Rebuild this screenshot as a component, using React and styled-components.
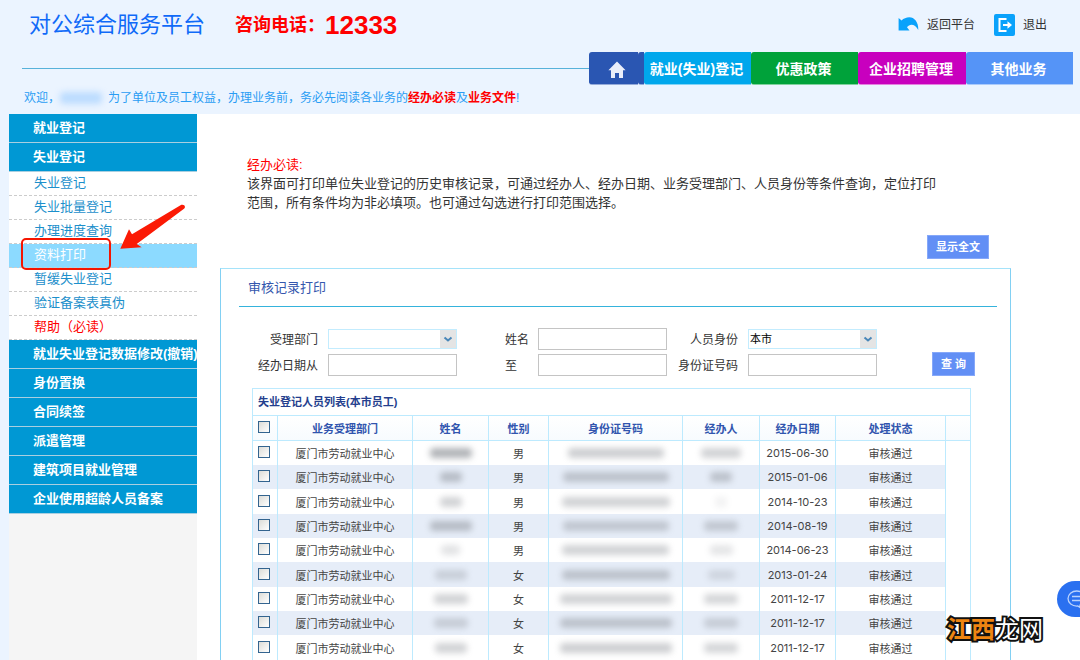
import React from "react";
import styled, { createGlobalStyle } from "styled-components";

const GlobalStyle = createGlobalStyle`
  *, *::before, *::after { box-sizing: border-box; }
  body {
    margin: 0;
    background: #ebf4ff;
    color: #333;
    font-family: "Liberation Sans", "Noto Sans CJK SC", sans-serif;
    font-size: 12px;
    overflow-x: hidden;
  }
  a { color: inherit; text-decoration: none; }
  button, input, select { font: inherit; }
`;

const Page = styled.div`
  position: relative;
  display: flex;
  flex-direction: column;
  min-height: 100vh;
  overflow: hidden;
`;

const Header = styled.header`
  display: flex;
  flex-direction: column;
  height: 114px;
`;

const Brand = styled.div`
  display: flex;
  align-items: center;
  height: 52px;
  padding: 0 33px 2px 29px;
`;

const Title = styled.h1`
  margin: 0;
  font-size: 22px;
  font-weight: 400;
  line-height: 32px;
  color: #0f6af8;
`;

const Hotline = styled.p`
  display: flex;
  align-items: center;
  margin: 0 auto 0 30px;
  font-size: 18px;
  font-weight: 700;
  line-height: 32px;
  color: #f00;
`;

const HotlineNumber = styled.strong`
  font-size: 26px;
`;

const TopLink = styled.a`
  display: flex;
  align-items: center;
  gap: 8px;
  margin-left: 19px;
  line-height: 20px;
`;

const NavBar = styled.div`
  display: flex;
  align-items: center;
  height: 33px;
  padding: 0 7px 0 22px;
`;

const Rule = styled.div`
  flex: 1;
  height: 1px;
  background: #57b2da;
`;

const Nav = styled.nav`
  display: flex;
  height: 33px;
`;

const NavItem = styled.a`
  display: flex;
  align-items: center;
  justify-content: center;
  width: ${(p) => p.$width || 107}px;
  padding-right: 2px;
  border-bottom: 1px solid rgba(255, 255, 255, 0.5);
  border-radius: 3px 0 0 3px;
  background: ${(p) => p.$color};
  color: #fff;
  font-size: 14px;
  font-weight: 700;
  white-space: nowrap;
`;

const HomeItem = styled(NavItem)`
  padding: 3px 0 0 6px;
`;

const Welcome = styled.p`
  display: flex;
  margin: 0;
  padding: 3px 24px;
  line-height: 20px;
  color: #2a9df4;
  white-space: nowrap;

  strong { color: #f00; }
`;

const UserName = styled.span`
  width: 42px;
  height: 12px;
  margin: 4px 6px 0 0;
  border-radius: 4px;
  background: #bcdcff;
  filter: blur(3px);
`;

const Body = styled.div`
  display: flex;
  flex: 1;
  padding-left: 9px;
`;

const Sidebar = styled.aside`
  flex: none;
  width: 188px;
  background: #f5f5f5;
`;

const Menu = styled.ul`
  margin: 0;
  padding: 0;
  list-style: none;
`;

const Group = styled.li`
  background: #0098d4;
  color: #fff;
  font-size: 13px;
  font-weight: 700;
`;

const GroupLink = styled.a`
  display: block;
  height: 29px;
  padding-left: 24px;
  border-bottom: 1px solid #a9cfe0;
  line-height: 27px;
  white-space: nowrap;
`;

const SubItem = styled.li`
  position: relative;
  background: ${(p) => (p.$active ? "#8cdaff" : "#fff")};
  color: ${(p) => (p.$active ? "#fff" : p.$alert ? "#f00" : "#1c8fcb")};
  font-size: 13px;
  font-weight: 400;
`;

const SubLink = styled.a`
  display: block;
  height: 24px;
  padding-left: 25px;
  border-bottom: 1px dashed #ccc;
  line-height: 21px;
`;

const Highlight = styled.span`
  position: absolute;
  z-index: 1;
  top: -6px;
  left: 12px;
  width: 90px;
  height: 32px;
  border: 2px solid #f51500;
  border-radius: 5px;
  pointer-events: none;
`;

const Arrow = styled.svg`
  position: absolute;
  z-index: 1;
  top: -40px;
  left: 110px;
  pointer-events: none;
`;

const Main = styled.main`
  display: flex;
  flex: 1;
  flex-direction: column;
  min-width: 0;
  padding: 41px 69px 0 23px;
  background: #fff;
`;

const Notice = styled.section`
  padding: 0 22px 0 27px;
  font-size: 13px;
  line-height: 19px;

  h2 {
    margin: 0;
    color: #f00;
    font-size: 13px;
    font-weight: 400;
  }
  p { margin: 0; }
`;

const NoticeActions = styled.div`
  display: flex;
  justify-content: flex-end;
  padding-top: 23px;
`;

const Button = styled.button`
  height: 24px;
  padding: 0 8px;
  border: 1px solid #86a8f9;
  background: #628ff5;
  color: #fff;
  font-size: 11px;
  font-weight: 700;
  line-height: 20px;
  white-space: nowrap;
`;

const Panel = styled.section`
  display: flex;
  flex: 1;
  flex-direction: column;
  margin-top: 9px;
  border: 1px solid #82d0f3;
  border-top-color: #a5e3fa;
  border-bottom: 0;
`;

const PanelTitle = styled.h2`
  margin: 0 13px 0 18px;
  padding-left: 9px;
  border-bottom: 1px solid #35b3dc;
  color: #3557ad;
  font-size: 13px;
  font-weight: 400;
  line-height: 37px;
`;

const Form = styled.form`
  display: grid;
  grid-template-columns: 66px 1fr 61px 1fr 61px 1fr 88px;
  align-items: center;
  gap: 4px 10px;
  margin: 21px 35px 12px 31px;
`;

const Label = styled.label`
  text-align: ${(p) => (p.$left ? "left" : "right")};
  padding: 0 0 2px ${(p) => (p.$left ? 38 : 0)}px;
  white-space: nowrap;
`;

const Input = styled.input`
  width: 100%;
  min-width: 0;
  height: 22px;
  padding: 0 2px;
  border: 1px solid #c4c4c4;
  background: #fff;
`;

const SelectBox = styled.div`
  position: relative;
  min-width: 0;

  svg {
    position: absolute;
    top: 1px;
    right: 1px;
    pointer-events: none;
  }
`;

const Select = styled.select`
  display: block;
  width: 100%;
  height: 20px;
  padding: 0 18px 0 1px;
  border: 1px solid #c3ecfe;
  border-radius: 0;
  appearance: none;
  background: #fff;
  color: #000;
  font-size: 11px;
`;

const Submit = styled(Button)`
  grid-column: 7;
  grid-row: 2;
  align-self: end;
  justify-self: end;
  width: 43px;
  margin-top: -2px;
`;

const TableBox = styled.div`
  flex: 1;
  margin: 0 39px 0 31px;
  border: 1px solid #bdeafe;
  border-bottom: 0;
`;

const Table = styled.table`
  width: 100%;
  table-layout: fixed;
  border-spacing: 0;
  font-size: 11px;
  color: #444;
  text-align: center;

  caption {
    padding-left: 5px;
    color: #253f8e;
    font-weight: 700;
    line-height: 26px;
    text-align: left;
  }
  th, td {
    height: 24px;
    padding: 0;
    border-right: 1px solid #bdeafe;
    white-space: nowrap;
  }
  th:last-child, td:last-child {
    border-right: 0;
  }
  th {
    height: 26px;
    border-top: 1px solid #bdeafe;
    border-bottom: 1px solid #bdeafe;
    background: linear-gradient(#fff, #f7fbfe);
    color: #3155ae;
    font-weight: 700;
  }
  tbody tr:nth-child(even) td:not(:last-child) {
    background: #e6edf8;
  }
  tbody tr:nth-child(3n) td {
    height: 25px;
  }
`;

const Check = styled.input`
  display: block;
  width: 12px;
  height: 12px;
  margin: 0 auto 2px 5px;
  appearance: none;
  border: 1px solid #33648f;
  background: linear-gradient(135deg, #dcdcd7, #fff);
`;

const DateText = styled.time`
  font-family: Inter, sans-serif;
`;

const Redacted = styled.span`
  display: block;
  height: 10px;
  margin: 0 auto;
  border-radius: 4px;
  background: #7d8188;
  filter: blur(3px);
`;

const ChatButton = styled.button`
  position: absolute;
  top: 581px;
  right: 0;
  display: flex;
  align-items: center;
  width: 23px;
  height: 36px;
  padding: 0 0 0 10px;
  overflow: hidden;
  border: 0;
  border-radius: 18px 0 0 18px;
  background: #2a70f0;
`;

const Watermark = styled.div`
  position: absolute;
  top: 613px;
  right: 37px;
  color: #ee8512;
  font-size: 24px;
  font-weight: 700;
  line-height: 34px;
  -webkit-text-stroke: 4px #111;
  paint-order: stroke fill;

  span {
    color: #fff;
    font-weight: 400;
  }
`;

const HomeIcon = () => (
  <svg width="18" height="18" viewBox="0 0 18 18" fill="#e9eefa" aria-hidden="true">
    <path d="M9 .5 17.6 9.3H15V17h-4v-5H7v5H3V9.3H.4Z" />
  </svg>
);

const ReturnIcon = () => (
  <svg width="21" height="16" viewBox="0 0 21 16" fill="#0aa2fb" aria-hidden="true">
    <path d="M.6 1V13.600H11.500L9 10.300C11.500 6.500 17 6.500 20.300 13 20.600 5 16.200.3 11.400.3 8.300.3 5.500 1.600 3.600 3.400Z" />
  </svg>
);

const ExitIcon = () => (
  <svg width="21" height="22" viewBox="0 0 21 22" fill="none" aria-hidden="true">
    <rect width="21" height="22" rx="2" fill="#0aa2fb" />
    <path d="M12.500 5H5.500V17H12.500M9 11H15" stroke="#fff" strokeWidth="2" />
    <path d="M13.500 7.200 18 11 13.500 14.800Z" fill="#fff" />
  </svg>
);

const DropIcon = () => (
  <svg width="16" height="18" viewBox="0 0 16 18" fill="none" aria-hidden="true">
    <rect width="16" height="18" fill="#e4e4e4" />
    <path d="M4.500 7.500 8 10.500 11.500 7.500" stroke="#4a87b8" strokeWidth="2" />
  </svg>
);

const ChatGlyph = styled.svg`
  flex: none;
`;

const ChatIcon = () => (
  <ChatGlyph width="20" height="20" viewBox="0 0 20 20" fill="none" stroke="#b9d2fd" aria-hidden="true">
    <path d="M13 18.500 10.800 17C5 17.500 1 13.800 1 9.600 1 5.500 4.800 2 9.800 2 14.800 2 18.600 5.500 18.600 9.600 18.600 12.200 17 14.600 13 16Z" strokeWidth="1.300" />
    <path d="M5 7.500H15M5 11.500H15" strokeWidth="1.500" />
  </ChatGlyph>
);

const SUB_ITEMS = [
  { text: "失业登记" },
  { text: "失业批量登记" },
  { text: "办理进度查询" },
  { text: "资料打印", active: true },
  { text: "暂缓失业登记" },
  { text: "验证备案表真伪" },
  { text: "帮助（必读）", alert: true },
];

const GROUPS = [
  "就业失业登记数据修改(撤销)",
  "身份置换",
  "合同续签",
  "派遣管理",
  "建筑项目就业管理",
  "企业使用超龄人员备案",
];

const COLUMNS = [
  ["业务受理部门", 135],
  ["姓名", 76],
  ["性别", 60],
  ["身份证号码", 134],
  ["经办人", 77],
  ["经办日期", 76],
  ["处理状态", 110],
];

/* name, id and agent hold the width and strength of each masked value */
const ROWS = [
  { sex: "男", date: "2015-06-30", name: [42, 0.6], id: [96, 0.38], agent: [40, 0.35] },
  { sex: "男", date: "2015-01-06", name: [22, 0.45], id: [106, 0.4], agent: [22, 0.4] },
  { sex: "男", date: "2014-10-23", name: [22, 0.35], id: [108, 0.35], agent: [12, 0.1] },
  { sex: "男", date: "2014-08-19", name: [42, 0.45], id: [106, 0.36], agent: [34, 0.35] },
  { sex: "男", date: "2014-06-23", name: [19, 0.22], id: [107, 0.35], agent: [23, 0.2] },
  { sex: "女", date: "2013-01-24", name: [32, 0.28], id: [108, 0.4], agent: [27, 0.22] },
  { sex: "女", date: "2011-12-17", name: [34, 0.35], id: [112, 0.35], agent: [34, 0.32] },
  { sex: "女", date: "2011-12-17", name: [34, 0.3], id: [112, 0.4], agent: [34, 0.3] },
  { sex: "女", date: "2011-12-17", name: [32, 0.35], id: [112, 0.38], agent: [34, 0.32] },
];

const Mask = ({ value: [width, opacity] }) => <Redacted style={{ width, opacity }} />;

export default function App() {
  return (
    <Page>
      <GlobalStyle />
      <Header>
        <Brand>
          <Title>对公综合服务平台</Title>
          <Hotline>
            咨询电话：<HotlineNumber>12333</HotlineNumber>
          </Hotline>
          <TopLink href="#platform">
            <ReturnIcon />
            返回平台
          </TopLink>
          <TopLink href="#logout">
            <ExitIcon />
            退出
          </TopLink>
        </Brand>
        <NavBar>
          <Rule />
          <Nav>
            <HomeItem href="#home" $color="#2a56b2" $width={49} aria-label="首页">
              <HomeIcon />
            </HomeItem>
            <NavItem as="span" $color="#2a56b2" $width={6} />
            <NavItem href="#register" $color="#00a7ec">就业(失业)登记</NavItem>
            <NavItem href="#policy" $color="#00a23a">优惠政策</NavItem>
            <NavItem href="#recruit" $color="#c800be" $width={108}>企业招聘管理</NavItem>
            <NavItem href="#other" $color="#5594f7">其他业务</NavItem>
          </Nav>
        </NavBar>
        <Welcome>
          欢迎，
          <UserName />
          为了单位及员工权益，办理业务前，务必先阅读各业务的<strong>经办必读</strong>及<strong>业务文件</strong>!
        </Welcome>
      </Header>

      <Body>
        <Sidebar>
          <Menu>
            <Group>
              <GroupLink href="#g-employ">就业登记</GroupLink>
            </Group>
            <Group>
              <GroupLink href="#g-unemploy">失业登记</GroupLink>
              <Menu>
                {SUB_ITEMS.map((item) => (
                  <SubItem key={item.text} $active={item.active} $alert={item.alert}>
                    <SubLink href="#item">{item.text}</SubLink>
                    {item.active && (
                      <>
                        <Highlight />
                        <Arrow width="68" height="48" viewBox="0 0 68 48" fill="#fb1a05" aria-hidden="true">
                          <path d="M1.300 44.700 10 25.300 13 30.300 61.500 1.300C64.500-.2 67.500 2.300 65 4.800L17.700 40 22.700 43.300Z" />
                        </Arrow>
                      </>
                    )}
                  </SubItem>
                ))}
              </Menu>
            </Group>
            {GROUPS.map((text) => (
              <Group key={text}>
                <GroupLink href="#group">{text}</GroupLink>
              </Group>
            ))}
          </Menu>
        </Sidebar>

        <Main>
          <Notice>
            <h2>经办必读:</h2>
            <p>
              该界面可打印单位失业登记的历史审核记录，可通过经办人、经办日期、业务受理部门、人员身份等条件查询，定位打印
              <br />
              范围，所有条件均为非必填项。也可通过勾选进行打印范围选择。
            </p>
            <NoticeActions>
              <Button type="button">显示全文</Button>
            </NoticeActions>
          </Notice>

          <Panel>
            <PanelTitle>审核记录打印</PanelTitle>
            <Form onSubmit={(e) => e.preventDefault()}>
              <Label htmlFor="dept">受理部门</Label>
              <SelectBox>
                <Select id="dept" defaultValue="">
                  <option value=""></option>
                </Select>
                <DropIcon />
              </SelectBox>
              <Label htmlFor="name" $left>姓名</Label>
              <Input id="name" />
              <Label htmlFor="identity">人员身份</Label>
              <SelectBox>
                <Select id="identity" defaultValue="local">
                  <option value="local">本市</option>
                </Select>
                <DropIcon />
              </SelectBox>
              <span />
              <Label htmlFor="from">经办日期从</Label>
              <Input id="from" />
              <Label htmlFor="to" $left>至</Label>
              <Input id="to" />
              <Label htmlFor="idno">身份证号码</Label>
              <Input id="idno" />
              <Submit type="submit">查 询</Submit>
            </Form>

            <TableBox>
              <Table>
                <caption>失业登记人员列表(本市员工)</caption>
                <colgroup>
                  <col width="25" />
                  {COLUMNS.map(([title, width]) => (
                    <col key={title} width={width} />
                  ))}
                  <col />
                </colgroup>
                <thead>
                  <tr>
                    <th><Check type="checkbox" aria-label="全选" /></th>
                    {COLUMNS.map(([title]) => (
                      <th key={title} scope="col">{title}</th>
                    ))}
                    <th />
                  </tr>
                </thead>
                <tbody>
                  {ROWS.map((row, i) => (
                    <tr key={i}>
                      <td><Check type="checkbox" aria-label="选择" /></td>
                      <td>厦门市劳动就业中心</td>
                      <td><Mask value={row.name} /></td>
                      <td>{row.sex}</td>
                      <td><Mask value={row.id} /></td>
                      <td><Mask value={row.agent} /></td>
                      <td><DateText>{row.date}</DateText></td>
                      <td>审核通过</td>
                      <td />
                    </tr>
                  ))}
                </tbody>
              </Table>
            </TableBox>
          </Panel>
        </Main>
      </Body>

      <ChatButton type="button" aria-label="在线咨询">
        <ChatIcon />
      </ChatButton>
      <Watermark>
        江西<span>龙网</span>
      </Watermark>
    </Page>
  );
}
